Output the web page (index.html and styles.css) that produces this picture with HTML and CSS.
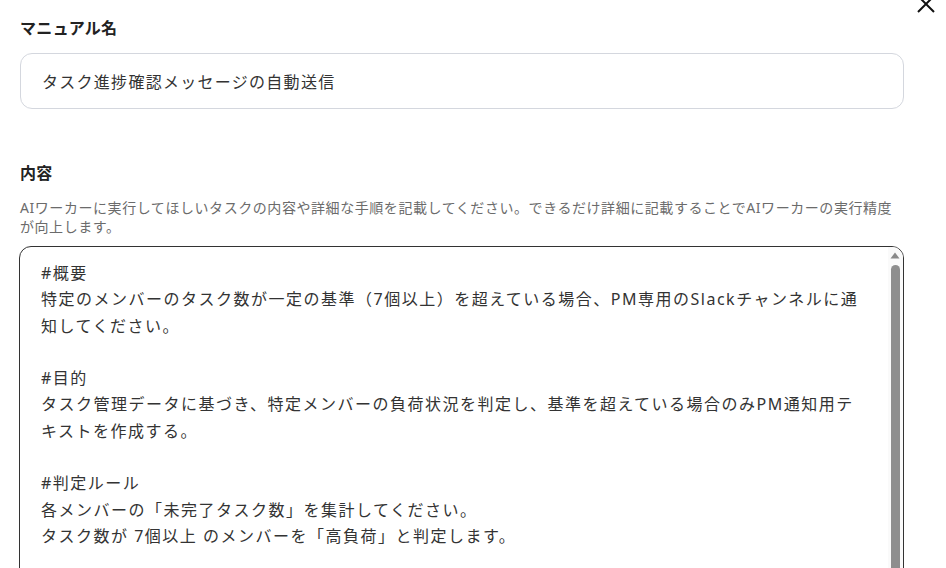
FILE: index.html
```html
<!DOCTYPE html>
<html lang="ja">

<head>
    <meta charset="UTF-8">
    <meta name="viewport" content="width=device-width, initial-scale=1.0">
    <title>マニュアル編集</title>
    <link rel="stylesheet" href="styles.css">
</head>

<body>
    <div class="panel">
        <button class="close" title="閉じる">
            <svg width="20" height="20" viewBox="0 0 20 20">
                <path d="M2 2 L18 18 M18 2 L2 18" stroke="#111" stroke-width="2" fill="none" />
            </svg>
        </button>

        <div class="field">
            <label class="label" for="manualName">マニュアル名</label>
            <input type="text" id="manualName" class="name-input" value="タスク進捗確認メッセージの自動送信">
        </div>

        <div class="field content-field">
            <label class="label" for="manualBody">内容</label>
            <p class="hint">AIワーカーに実行してほしいタスクの内容や詳細な手順を記載してください。できるだけ詳細に記載することでAIワーカーの実行精度が向上します。</p>
            <div class="body-wrap">
                <textarea id="manualBody" class="body-input">#概要
特定のメンバーのタスク数が一定の基準（7個以上）を超えている場合、PM専用のSlackチャンネルに通知してください。

#目的
タスク管理データに基づき、特定メンバーの負荷状況を判定し、基準を超えている場合のみPM通知用テキストを作成する。

#判定ルール
各メンバーの「未完了タスク数」を集計してください。
タスク数が 7個以上 のメンバーを「高負荷」と判定します。

#出力形式
以下の形式で通知用テキストを作成してください。
【高負荷アラート】
メンバー名：
未完了タスク数：
対応をご検討ください。</textarea>
                <div class="scrollbar">
                    <svg class="scroll-up" width="10" height="7" viewBox="0 0 10 7">
                        <path d="M5 0.5 L9.5 6.5 L0.5 6.5 Z" fill="#8a8a8a" />
                    </svg>
                    <div class="scroll-thumb"></div>
                </div>
            </div>
        </div>
    </div>
</body>

</html>
```

FILE: styles.css
```css
body {
    margin: 0;
    background-color: white;
    font-family: "Noto Sans", "Noto Sans CJK JP", sans-serif;
    color: #333;
    overflow: hidden;
}

.panel {
    position: relative;
    padding: 16px 42px 0 20px;
}

.close {
    position: absolute;
    top: -6px;
    right: 10px;
    padding: 0;
    border: none;
    background: none;
    cursor: pointer;
}

.field {
    display: flex;
    flex-direction: column;
}

.label {
    font-size: 16px;
    font-weight: bold;
    line-height: 24px;
    color: #222;
    letter-spacing: 0.02em;
}

.name-input {
    margin-top: 13px;
    height: 56px;
    box-sizing: border-box;
    padding: 0 21px;
    border: 1px solid #d4d7de;
    border-radius: 12px;
    font-family: inherit;
    font-size: 16px;
    letter-spacing: 0.08em;
    color: #333;
    outline: none;
}

.content-field {
    margin-top: 52px;
}

.hint {
    margin: 13px 0 10px;
    font-size: 14px;
    line-height: 19px;
    letter-spacing: 0.04em;
    color: #6b6b6b;
}

.body-wrap {
    position: relative;
    margin-left: -1px;
    display: flex;
}

.body-input {
    flex: 1;
    height: 470px;
    box-sizing: border-box;
    padding: 13px 36px 13px 21px;
    border: 1px solid #333;
    border-radius: 12px;
    font-family: inherit;
    font-size: 16px;
    line-height: 26.3px;
    letter-spacing: 1.5px;
    color: #333;
    resize: none;
    outline: none;
    overflow: hidden;
}

/* 自前のスクロールバー（テキストエリアの上に重ねる） */
.scrollbar {
    position: absolute;
    top: 1px;
    right: 1px;
    bottom: 1px;
    width: 15px;
    background-color: #fafafa;
    border-radius: 0 11px 11px 0;
    display: flex;
    flex-direction: column;
    align-items: center;
}

.scroll-up {
    margin-top: 5px;
    margin-right: 1px;
}

.scroll-thumb {
    margin-top: 6px;
    margin-right: 1px;
    width: 9px;
    height: 380px;
    background-color: #8e8e8e;
    border-radius: 5px;
}
```
